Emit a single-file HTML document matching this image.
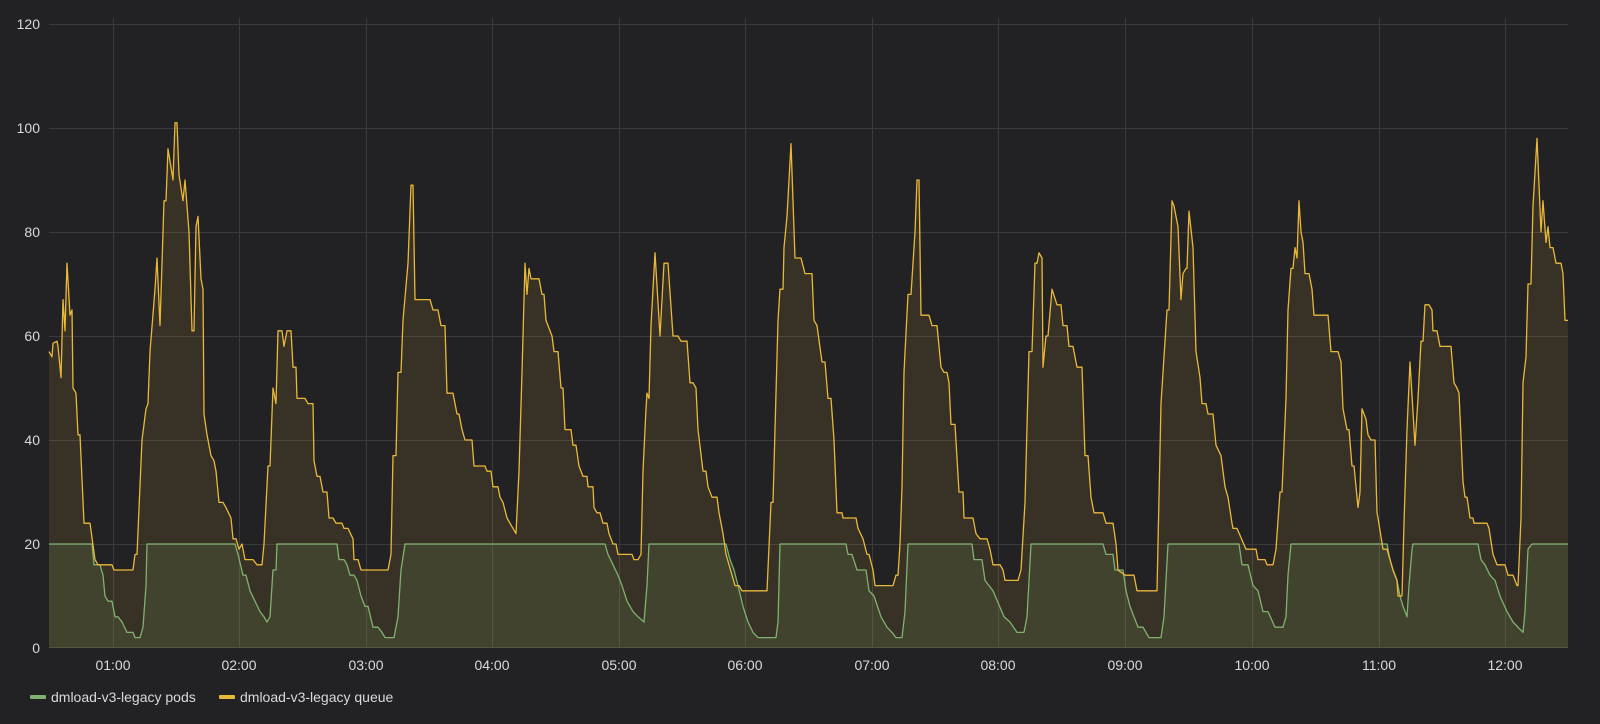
<!DOCTYPE html>
<html><head><meta charset="utf-8"><style>
html,body{margin:0;padding:0;background:#222225;}
body{width:1600px;height:719px;overflow:hidden;font-family:"Liberation Sans",sans-serif;}
svg text{font-family:"Liberation Sans",sans-serif;fill:#d8d9da;font-size:14px;}
</style></head><body>
<svg width="1600" height="719" viewBox="0 0 1600 719" xmlns="http://www.w3.org/2000/svg">
<rect x="0" y="0" width="1600" height="719" fill="#222225"/>
<g stroke="#3a3a3d" stroke-width="1">
<line x1="49" y1="24.5" x2="1568" y2="24.5"/>
<line x1="49" y1="128.5" x2="1568" y2="128.5"/>
<line x1="49" y1="232.5" x2="1568" y2="232.5"/>
<line x1="49" y1="336.5" x2="1568" y2="336.5"/>
<line x1="49" y1="440.5" x2="1568" y2="440.5"/>
<line x1="49" y1="544.5" x2="1568" y2="544.5"/>
<line x1="49" y1="647.5" x2="1568" y2="647.5"/>
<line x1="113.5" y1="18" x2="113.5" y2="648"/>
<line x1="239.5" y1="18" x2="239.5" y2="648"/>
<line x1="366.5" y1="18" x2="366.5" y2="648"/>
<line x1="492.5" y1="18" x2="492.5" y2="648"/>
<line x1="619.5" y1="18" x2="619.5" y2="648"/>
<line x1="745.5" y1="18" x2="745.5" y2="648"/>
<line x1="872.5" y1="18" x2="872.5" y2="648"/>
<line x1="998.5" y1="18" x2="998.5" y2="648"/>
<line x1="1125.5" y1="18" x2="1125.5" y2="648"/>
<line x1="1252.5" y1="18" x2="1252.5" y2="648"/>
<line x1="1379.5" y1="18" x2="1379.5" y2="648"/>
<line x1="1505.5" y1="18" x2="1505.5" y2="648"/>
</g>
<g transform="matrix(1,0,0,-5.2,0,648)">
<polygon fill="#eab839" fill-opacity="0.11" points="49,0 49,57 52,56 53,58.6 57,59 58,58 61,52 63,67 65,61 67,74 70,64 72,65 73,50 76,49 78,41 80,41 84,24 90,24 95,17 98,16 112,16 114,15 133,15 135,18 137,18 142,40 146,46 148,47 150,57 155,69 157,75 160,62 164,86 166,86 168,96 173,90 175,101 177,101 179,91 183,86 185,90 189,80 192,61 194,61 196,81 198,83 201,71 203,69 204,45 207,41 211,37 214,36 216,34 219,28 223,28 226,27 231,25 233,21 236,21 239,19 242,20 245,17 253,17 257,16 262,16 264,20 268,35 270,35 273,50 276,47 278,61 282,61 284,58 287,61 291,61 293,54 296,54 297,48 305,48 308,47 313,47 314,36 317,33 320,33 323,30 327,30 329,25 333,25 336,24 342,24 344,23 348,23 353,21 354,17 358,17 361,15 388,15 391,18 393,37 396,37 398,53 401,53 403,63 408,74 411,89 413,89 415,67 430,67 433,65 438,65 441,62 445,62 447,49 453,49 457,45 459,45 462,42 465,40 472,40 474,35 485,35 487,34 491,34 493,31 498,31 500,29 503,28 507,25 510,24 516,22 519,34 522,53 525,74 527,68 529,73 531,71 539,71 542,68 544,68 546,63 552,60 554,57 558,57 561,50 563,50 565,42 571,42 573,39 576,39 579,35 583,33 587,33 588,31 593,31 594,27 597,26 600,26 603,24 607,24 609,22 613,20 616,20 618,18 632,18 634,17 638,17 641,18 643,34 646,46 647,49 649,48 651,62 655,76 660,60 664,74 668,74 673,60 678,60 681,59 687,59 690,51 693,51 696,50 698,42 703,34 706,34 708,31 712,29 717,29 719,26 723,22 726,18 732,14 735,12 739,12 742,11 767,11 771,28 773,28 778,63 780,69 783,69 784,77 787,83 791,97 795,75 801,75 805,72 812,72 814,63 817,62 822,55 825,55 828,48 831,48 834,40 837,26 842,26 843,25 856,25 858,23 863,21 867,18 869,18 873,15 875,12 893,12 896,14 898,14 900,20 902,31 904,53 908,68 911,68 915,80 917,90 919,90 921,64 929,64 932,62 937,62 941,54 944,53 947,53 949,51 951,43 955,43 959,30 963,30 964,25 973,25 976,22 980,21 987,21 990,19 993,16 1000,16 1003,15 1005,13 1018,13 1021,15 1025,28 1029,57 1032,57 1035,74 1037,74 1039,76 1042,75 1043,54 1046,60 1048,60 1052,69 1057,66 1061,66 1063,62 1067,62 1069,58 1073,58 1077,54 1082,54 1085,37 1088,37 1091,29 1094,26 1103,26 1106,24 1113,24 1116,20 1118,15 1125,14 1134,14 1137,11 1157,11 1161,47 1167,65 1169,65 1172,86 1174,85 1178,81 1181,67 1183,72 1186,73 1187,73 1189,84 1193,77 1196,57 1200,52 1202,47 1206,47 1208,45 1213,45 1216,39 1221,37 1225,31 1228,29 1232,24 1233,23 1237,23 1246,19 1256,19 1258,17 1265,17 1267,16 1273,16 1276,19 1280,30 1282,30 1286,48 1288,65 1291,73 1293,73 1295,77 1297,75 1299,86 1301,80 1303,78 1305,72 1309,72 1312,69 1314,64 1328,64 1331,57 1338,57 1341,55 1343,46 1347,42 1349,42 1352,35 1354,35 1358,27 1360,30 1362,46 1366,44 1368,41 1371,40 1375,40 1377,26 1378,25 1383,19 1387,19 1393,15 1397,13 1398,10 1402,10 1404,24 1407,42 1410,55 1415,39 1418,48 1421,59 1423,59 1425,66 1429,66 1432,65 1433,61 1437,61 1440,58 1451,58 1454,51 1457,50 1459,49 1463,32 1465,29 1467,29 1470,25 1473,25 1474,24 1487,24 1489,23 1493,18 1497,16 1505,16 1508,14 1513,14 1517,12 1518,12 1521,25 1523,51 1526,56 1528,70 1531,70 1533,85 1537,98 1541,80 1543,86 1546,78 1548,81 1550,77 1553,77 1556,74 1561,74 1563,72 1565,63 1568,63 1568,0"/>
<polygon fill="#7eb26d" fill-opacity="0.14" points="49,0 49,20 92,20 94,16 100,16 103,14 105,10 108,9 112,9 115,6 118,6 122,5 127,3 133,3 135,2 140,2 143,4 146,12 147,20 235,20 238,18 243,14 246,14 250,11 260,7 264,6 267,5 270,6 273,15 276,15 277,20 337,20 339,17 344,17 347,16 350,14 354,14 357,13 361,10 365,8 368,8 373,4 378,4 382,3 385,2 394,2 398,6 401,15 405,20 605,20 608,18 613,16 618,14 622,12 627,9 633,7 638,6 644,5 647,12 649,20 726,20 730,17 734,15 738,12 743,8 748,5 753,3 758,2 776,2 778,5 780,20 846,20 848,18 852,18 857,15 866,15 869,11 874,10 881,6 887,4 892,3 896,2 902,2 905,7 908,20 972,20 974,17 982,17 985,13 989,12 993,11 1004,6 1010,5 1017,3 1024,3 1027,6 1031,20 1103,20 1106,18 1113,18 1115,15 1123,15 1126,11 1130,8 1138,4 1143,4 1149,2 1161,2 1164,6 1168,20 1239,20 1242,16 1248,16 1253,12 1258,11 1263,7 1268,7 1275,4 1283,4 1286,6 1288,14 1291,20 1387,20 1390,17 1393,15 1397,13 1400,10 1403,8 1407,6 1409,12 1412,19 1413,20 1478,20 1481,17 1485,16 1490,14 1495,13 1500,10 1507,7 1513,5 1518,4 1523,3 1525,7 1528,19 1532,20 1568,20 1568,0"/>
<polyline fill="none" stroke="#7eb26d" stroke-width="1.3" vector-effect="non-scaling-stroke" stroke-linejoin="round" points="49,20 92,20 94,16 100,16 103,14 105,10 108,9 112,9 115,6 118,6 122,5 127,3 133,3 135,2 140,2 143,4 146,12 147,20 235,20 238,18 243,14 246,14 250,11 260,7 264,6 267,5 270,6 273,15 276,15 277,20 337,20 339,17 344,17 347,16 350,14 354,14 357,13 361,10 365,8 368,8 373,4 378,4 382,3 385,2 394,2 398,6 401,15 405,20 605,20 608,18 613,16 618,14 622,12 627,9 633,7 638,6 644,5 647,12 649,20 726,20 730,17 734,15 738,12 743,8 748,5 753,3 758,2 776,2 778,5 780,20 846,20 848,18 852,18 857,15 866,15 869,11 874,10 881,6 887,4 892,3 896,2 902,2 905,7 908,20 972,20 974,17 982,17 985,13 989,12 993,11 1004,6 1010,5 1017,3 1024,3 1027,6 1031,20 1103,20 1106,18 1113,18 1115,15 1123,15 1126,11 1130,8 1138,4 1143,4 1149,2 1161,2 1164,6 1168,20 1239,20 1242,16 1248,16 1253,12 1258,11 1263,7 1268,7 1275,4 1283,4 1286,6 1288,14 1291,20 1387,20 1390,17 1393,15 1397,13 1400,10 1403,8 1407,6 1409,12 1412,19 1413,20 1478,20 1481,17 1485,16 1490,14 1495,13 1500,10 1507,7 1513,5 1518,4 1523,3 1525,7 1528,19 1532,20 1568,20"/>
<polyline fill="none" stroke="#eab839" stroke-width="1.3" vector-effect="non-scaling-stroke" stroke-linejoin="round" points="49,57 52,56 53,58.6 57,59 58,58 61,52 63,67 65,61 67,74 70,64 72,65 73,50 76,49 78,41 80,41 84,24 90,24 95,17 98,16 112,16 114,15 133,15 135,18 137,18 142,40 146,46 148,47 150,57 155,69 157,75 160,62 164,86 166,86 168,96 173,90 175,101 177,101 179,91 183,86 185,90 189,80 192,61 194,61 196,81 198,83 201,71 203,69 204,45 207,41 211,37 214,36 216,34 219,28 223,28 226,27 231,25 233,21 236,21 239,19 242,20 245,17 253,17 257,16 262,16 264,20 268,35 270,35 273,50 276,47 278,61 282,61 284,58 287,61 291,61 293,54 296,54 297,48 305,48 308,47 313,47 314,36 317,33 320,33 323,30 327,30 329,25 333,25 336,24 342,24 344,23 348,23 353,21 354,17 358,17 361,15 388,15 391,18 393,37 396,37 398,53 401,53 403,63 408,74 411,89 413,89 415,67 430,67 433,65 438,65 441,62 445,62 447,49 453,49 457,45 459,45 462,42 465,40 472,40 474,35 485,35 487,34 491,34 493,31 498,31 500,29 503,28 507,25 510,24 516,22 519,34 522,53 525,74 527,68 529,73 531,71 539,71 542,68 544,68 546,63 552,60 554,57 558,57 561,50 563,50 565,42 571,42 573,39 576,39 579,35 583,33 587,33 588,31 593,31 594,27 597,26 600,26 603,24 607,24 609,22 613,20 616,20 618,18 632,18 634,17 638,17 641,18 643,34 646,46 647,49 649,48 651,62 655,76 660,60 664,74 668,74 673,60 678,60 681,59 687,59 690,51 693,51 696,50 698,42 703,34 706,34 708,31 712,29 717,29 719,26 723,22 726,18 732,14 735,12 739,12 742,11 767,11 771,28 773,28 778,63 780,69 783,69 784,77 787,83 791,97 795,75 801,75 805,72 812,72 814,63 817,62 822,55 825,55 828,48 831,48 834,40 837,26 842,26 843,25 856,25 858,23 863,21 867,18 869,18 873,15 875,12 893,12 896,14 898,14 900,20 902,31 904,53 908,68 911,68 915,80 917,90 919,90 921,64 929,64 932,62 937,62 941,54 944,53 947,53 949,51 951,43 955,43 959,30 963,30 964,25 973,25 976,22 980,21 987,21 990,19 993,16 1000,16 1003,15 1005,13 1018,13 1021,15 1025,28 1029,57 1032,57 1035,74 1037,74 1039,76 1042,75 1043,54 1046,60 1048,60 1052,69 1057,66 1061,66 1063,62 1067,62 1069,58 1073,58 1077,54 1082,54 1085,37 1088,37 1091,29 1094,26 1103,26 1106,24 1113,24 1116,20 1118,15 1125,14 1134,14 1137,11 1157,11 1161,47 1167,65 1169,65 1172,86 1174,85 1178,81 1181,67 1183,72 1186,73 1187,73 1189,84 1193,77 1196,57 1200,52 1202,47 1206,47 1208,45 1213,45 1216,39 1221,37 1225,31 1228,29 1232,24 1233,23 1237,23 1246,19 1256,19 1258,17 1265,17 1267,16 1273,16 1276,19 1280,30 1282,30 1286,48 1288,65 1291,73 1293,73 1295,77 1297,75 1299,86 1301,80 1303,78 1305,72 1309,72 1312,69 1314,64 1328,64 1331,57 1338,57 1341,55 1343,46 1347,42 1349,42 1352,35 1354,35 1358,27 1360,30 1362,46 1366,44 1368,41 1371,40 1375,40 1377,26 1378,25 1383,19 1387,19 1393,15 1397,13 1398,10 1402,10 1404,24 1407,42 1410,55 1415,39 1418,48 1421,59 1423,59 1425,66 1429,66 1432,65 1433,61 1437,61 1440,58 1451,58 1454,51 1457,50 1459,49 1463,32 1465,29 1467,29 1470,25 1473,25 1474,24 1487,24 1489,23 1493,18 1497,16 1505,16 1508,14 1513,14 1517,12 1518,12 1521,25 1523,51 1526,56 1528,70 1531,70 1533,85 1537,98 1541,80 1543,86 1546,78 1548,81 1550,77 1553,77 1556,74 1561,74 1563,72 1565,63 1568,63"/>
</g>
<g text-anchor="end">
<text x="40" y="29">120</text>
<text x="40" y="133">100</text>
<text x="40" y="237">80</text>
<text x="40" y="341">60</text>
<text x="40" y="445">40</text>
<text x="40" y="549">20</text>
<text x="40" y="653">0</text>
</g>
<g text-anchor="middle">
<text x="113" y="670">01:00</text>
<text x="239" y="670">02:00</text>
<text x="366" y="670">03:00</text>
<text x="492" y="670">04:00</text>
<text x="619" y="670">05:00</text>
<text x="745" y="670">06:00</text>
<text x="872" y="670">07:00</text>
<text x="998" y="670">08:00</text>
<text x="1125" y="670">09:00</text>
<text x="1252" y="670">10:00</text>
<text x="1379" y="670">11:00</text>
<text x="1505" y="670">12:00</text>
</g>
<rect x="30" y="695" width="16" height="4" rx="1" fill="#7eb26d"/>
<text x="51" y="702">dmload-v3-legacy pods</text>
<rect x="219" y="695" width="16" height="4" rx="1" fill="#eab839"/>
<text x="240" y="702">dmload-v3-legacy queue</text>
</svg>
</body></html>
